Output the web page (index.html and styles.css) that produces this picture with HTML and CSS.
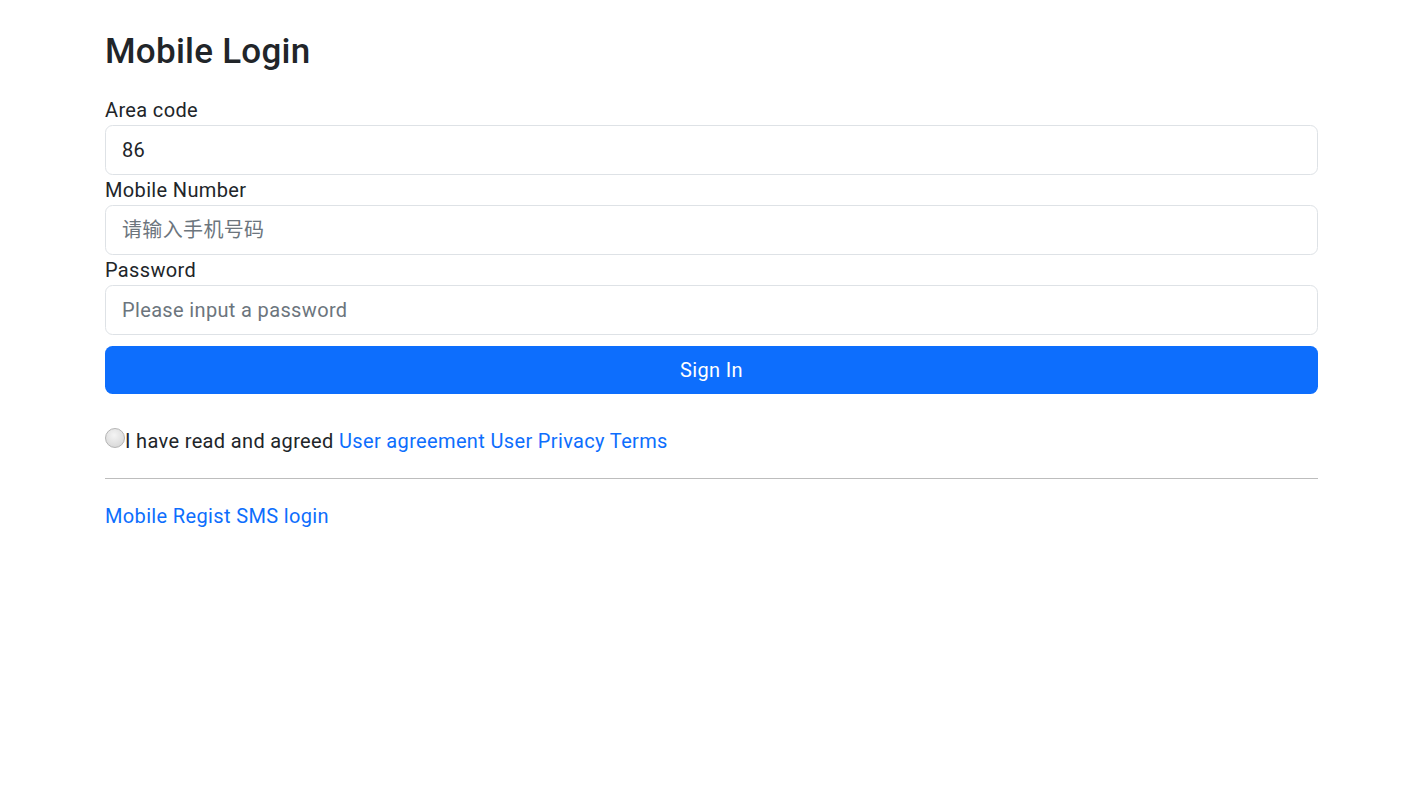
FILE: index.html
```html
<!DOCTYPE html>
<html lang="en">
<head>
<meta charset="utf-8">
<title>Mobile Login</title>
<link rel="stylesheet" href="styles.css">
</head>
<body>
<main class="page">
  <h3 class="title">Mobile Login</h3>
  <form class="form">
    <div class="field">
      <label class="label" for="area">Area code</label>
      <input class="control" id="area" type="text" value="86">
    </div>
    <div class="field">
      <label class="label" for="mobile">Mobile Number</label>
      <input class="control" id="mobile" type="text" placeholder="请输入手机号码">
    </div>
    <div class="field">
      <label class="label" for="pwd">Password</label>
      <input class="control" id="pwd" type="password" placeholder="Please input a password">
    </div>
    <button class="btn" type="button">Sign In</button>
  </form>
  <p class="agree"><span class="radio"></span>I have read and agreed <a href="#" class="link">User agreement</a> <a href="#" class="link">User Privacy Terms</a></p>
  <hr class="divider">
  <p class="links"><a href="#" class="link">Mobile Regist</a> <a href="#" class="link">SMS login</a></p>
</main>
</body>
</html>
```

FILE: styles.css
```css
* { box-sizing: border-box; }
html, body { margin: 0; padding: 0; background: #fff; }
body {
  font-family: Roboto, "Noto Sans CJK SC", sans-serif;
  font-size: 20px;
  line-height: 30px;
  color: #212529;
  letter-spacing: 0.35px;
}
.page {
  padding: 0 104px 0 105px;
}
.title {
  margin: 31px 0 22px;
  font-size: 35px;
  line-height: 42px;
  font-weight: 500;
  letter-spacing: 0.25px;
}
.form { margin: 0; }
.field { display: flex; flex-direction: column; }
.label {
  display: block;
  line-height: 30px;
  height: 30px;
}
.control {
  display: block;
  width: 100%;
  height: 50px;
  border: 1px solid #dee2e6;
  border-radius: 7.5px;
  padding: 0 16px;
  font-family: Roboto, "Noto Sans CJK SC", sans-serif;
  font-size: 20px;
  letter-spacing: 0.35px;
  color: #212529;
  background: #fff;
  outline: none;
}
.control::placeholder { color: #6c757d; opacity: 1; }
.btn {
  display: block;
  width: 100%;
  height: 48px;
  margin-top: 11px;
  border: 0;
  border-radius: 7.5px;
  background: #0d6efd;
  color: #fff;
  font-family: Roboto, sans-serif;
  font-size: 20px;
  letter-spacing: 0.35px;
  line-height: 30px;
  padding: 0;
}
.agree {
  margin: 32px 0 0;
  line-height: 30px;
}
.radio {
  display: inline-block;
  width: 20px;
  height: 20px;
  margin-top: 2px;
  vertical-align: top;
  border-radius: 50%;
  border: 1px solid #b4b4b4;
  background: radial-gradient(circle at 45% 35%, #f4f4f4 0%, #dcdcdc 70%, #c8c8c8 100%);
}
.link { color: #0d6efd; text-decoration: none; }
.divider {
  margin: 22px 0 0;
  border: 0;
  border-top: 1px solid #bdbdbd;
  height: 0;
}
.links {
  margin: 22px 0 0;
  line-height: 30px;
}
```
